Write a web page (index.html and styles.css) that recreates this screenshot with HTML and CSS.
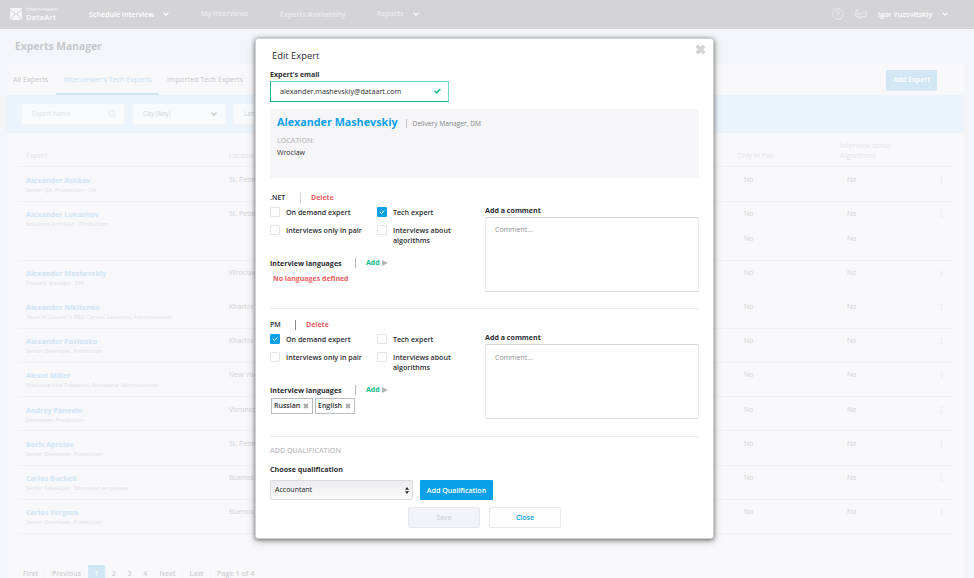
FILE: index.html
```html
<!DOCTYPE html>
<html lang="en">
<head>
  <meta charset="UTF-8">
  <meta name="viewport" content="width=device-width, initial-scale=1.0">
  <title>Experts Manager</title>
  <link rel="stylesheet" href="styles.css">
</head>
<body>
  <header class="header">
    <div class="logo">
      <svg width="12" height="12" viewBox="0 0 12 12">
        <rect width="12" height="12" rx="1" fill="#f6f6f8"/>
        <path d="M0 1.5L6 6.5L12 1.5M1 11.5L5 5.8M11 11.5L7 5.8" fill="none" stroke="#d4d4d6" stroke-width="1"/>
      </svg>
      <div class="logo-text"><span>Interviewer</span><b>DataArt</b></div>
    </div>
    <nav class="nav">
      <a class="nav-item active">Schedule Interview <svg class="chevron" viewBox="0 0 6 4"><path d="M.6 .7L3 3.1L5.4 .7"/></svg></a>
      <a class="nav-item interviews">My Interviews</a>
      <a class="nav-item availability">Experts Availability</a>
      <a class="nav-item reports">Reports <svg class="chevron" viewBox="0 0 6 4"><path d="M.6 .7L3 3.1L5.4 .7"/></svg></a>
    </nav>
    <div class="user">
      <svg width="12" height="12" viewBox="0 0 12 12" fill="none" stroke="#f0f0f2" stroke-width=".8">
        <circle cx="6" cy="6" r="5.3"/>
        <path d="M4.6 4.8C4.6 3 7.4 3 7.4 4.7C7.4 5.8 6 5.8 6 7M6 8V8.8"/>
      </svg>
      <svg width="12" height="12" viewBox="0 0 12 12" fill="none" stroke="#f0f0f2" stroke-width=".8">
        <path d="M3 2H1V8.8H4L5.5 10.6V8.8H11V2M3.5 4V6.3H6L9 3.5"/>
      </svg>
      <span class="user-name">Igor Yuzovitskiy</span>
      <svg class="chevron" viewBox="0 0 6 4"><path d="M.6 .7L3 3.1L5.4 .7"/></svg>
    </div>
  </header>

  <h1>Experts Manager</h1>

  <main class="panel">
    <div class="tabs">
      <a class="tab all">All Experts</a>
      <a class="tab selected">Interviewer's Tech Experts</a>
      <a class="tab imported">Imported Tech Experts</a>
      <button class="add-expert">Add Expert</button>
    </div>
    <div class="filters">
      <div class="filter search">Expert Name
        <svg width="8" height="8" viewBox="0 0 8 8" fill="none" stroke="#e4e6ea" stroke-width=".8"><circle cx="3.4" cy="3.4" r="2.7"/><path d="M5.4 5.4L7.6 7.6"/></svg>
      </div>
      <div class="filter city">City (Any) <svg class="chevron" viewBox="0 0 6 4"><path d="M.6 .7L3 3.1L5.4 .7"/></svg></div>
      <div class="filter language">Language</div>
    </div>

    <div class="table">
      <div class="row head"><span>Expert</span><span>Location</span><span>Only in Pair</span><span>Interview about<br>Algorithms</span></div>
      <div class="row first">
        <div><b>Alexander Ashkov</b><small>Senior QA, Production - QA</small></div>
        <span>St. Petersburg</span><span class="no">No</span><span class="no">No</span><i>⋮</i>
      </div>
      <div class="row double">
        <div><b>Alexander Lukashov</b><small>Solutions Architect , Production</small></div>
        <span>St. Petersburg</span><span class="no">No<em>No</em></span><span class="no">No<em>No</em></span><i>⋮</i>
      </div>
      <div class="row plain">
        <div><b>Alexander Mashevskiy</b><small>Delivery Manager, DM</small></div>
        <span>Wroclaw</span><span class="no">No</span><span class="no">No</span><i>⋮</i>
      </div>
      <div class="row">
        <div><b>Alexander Nikitenko</b><small>Head of DataArt's R&amp;D Center, Locations Administration</small></div>
        <span>Kharkiv</span><span class="no">No</span><span class="no">No</span><i>⋮</i>
      </div>
      <div class="row">
        <div><b>Alexander Pavlenko</b><small>Senior Developer, Production</small></div>
        <span>Kharkiv</span><span class="no">No</span><span class="no">No</span><i>⋮</i>
      </div>
      <div class="row">
        <div><b>Alexei Miller</b><small>Executive Vice President, Functional Administration</small></div>
        <span>New York</span><span class="no">No</span><span class="no">No</span><i>⋮</i>
      </div>
      <div class="row">
        <div><b>Andrey Panevin</b><small>Developer, Production</small></div>
        <span>Voronezh</span><span class="no">No</span><span class="no">No</span><i>⋮</i>
      </div>
      <div class="row">
        <div><b>Boris Aprelov</b><small>Senior Developer, Production</small></div>
        <span>St. Petersburg</span><span class="no">No</span><span class="no">No</span><i>⋮</i>
      </div>
      <div class="row">
        <div><b>Carlos Bucheli</b><small>Senior Developer, Dismissed employee</small></div>
        <span>Buenos Aires</span><span class="no">No</span><span class="no">No</span><i>⋮</i>
      </div>
      <div class="row">
        <div><b>Carlos Vergara</b><small>Senior Developer, Production</small></div>
        <span>Buenos Aires</span><span class="no">No</span><span class="no">No</span><i>⋮</i>
      </div>
    </div>

    <div class="pagination">
      <a class="page first-page">First</a><a class="page prev">Previous</a><a class="page current">1</a><a class="page num">2</a><a class="page num">3</a><a class="page num">4</a><a class="page next">Next</a><a class="page last">Last</a><span>Page 1 of 4</span>
    </div>
  </main>

  <div class="modal">
    <svg class="close-icon" width="11" height="11" viewBox="0 0 11 11"><path d="M1.8 1.8L9.2 9.2M9.2 1.8L1.8 9.2"/></svg>
    <h2>Edit Expert</h2>
    <label class="email-label">Expert's email</label>
    <div class="email">
      <span>alexander.mashevskiy@dataart.com</span>
      <svg width="7" height="6" viewBox="0 0 7 6"><path d="M.7 3L2.6 4.8L6.3 1"/></svg>
    </div>

    <div class="card">
      <div class="card-name"><b>Alexander Mashevskiy</b><span>Delivery Manager, DM</span></div>
      <div class="card-label">LOCATION:</div>
      <div class="card-city">Wroclaw</div>
    </div>

    <section class="qualification">
      <div class="left">
        <div class="q-title net"><b>.NET</b><a>Delete</a></div>
        <div class="checks">
          <label><i class="box"></i>On demand expert</label>
          <label><i class="box checked"><svg viewBox="0 0 10 10"><path d="M2.8 5L4.4 6.5L7.3 3.6"/></svg></i>Tech expert</label>
          <label><i class="box"></i>Interviews only in pair</label>
          <label><i class="box"></i>Interviews about<br>algorithms</label>
        </div>
        <div class="languages"><b>Interview languages</b><a>Add</a><svg width="6" height="6" viewBox="0 0 6 6"><path d="M0 0L6 3L0 6Z" fill="#b4b6b8"/></svg></div>
        <div class="empty">No languages defined</div>
      </div>
      <div class="right">
        <b>Add a comment</b>
        <div class="comment">Comment...</div>
      </div>
    </section>

    <section class="qualification">
      <div class="left">
        <div class="q-title pm"><b>PM</b><a>Delete</a></div>
        <div class="checks">
          <label><i class="box checked"><svg viewBox="0 0 10 10"><path d="M2.8 5L4.4 6.5L7.3 3.6"/></svg></i>On demand expert</label>
          <label><i class="box"></i>Tech expert</label>
          <label><i class="box"></i>Interviews only in pair</label>
          <label><i class="box"></i>Interviews about<br>algorithms</label>
        </div>
        <div class="languages"><b>Interview languages</b><a>Add</a><svg width="6" height="6" viewBox="0 0 6 6"><path d="M0 0L6 3L0 6Z" fill="#b4b6b8"/></svg></div>
        <div class="tags">
          <span class="tag russian">Russian<svg viewBox="0 0 6 6"><path d="M1 1L5 5M5 1L1 5"/></svg></span>
          <span class="tag english">English<svg viewBox="0 0 6 6"><path d="M1 1L5 5M5 1L1 5"/></svg></span>
        </div>
      </div>
      <div class="right">
        <b>Add a comment</b>
        <div class="comment">Comment...</div>
      </div>
    </section>

    <div class="add-title">ADD QUALIFICATION</div>
    <label class="choose">Choose qualification</label>
    <div class="add-row">
      <div class="select">Accountant <svg width="4" height="7" viewBox="0 0 4 7"><path d="M0 2.8L2 0L4 2.8ZM0 4.2L2 7L4 4.2Z" fill="#222"/></svg></div>
      <button class="add-btn">Add Qualification</button>
    </div>
    <div class="actions">
      <button class="save">Save</button>
      <button class="close">Close</button>
    </div>
  </div>
</body>
</html>
```

FILE: styles.css
```css
* {
  box-sizing: border-box;
}

body {
  margin: 0;
  height: 578px;
  overflow: hidden;
  position: relative;
  background-color: #f4f5f9;
  font-family: "Open Sans", sans-serif;
  font-size: 7px;
  line-height: 10px;
  color: #2c2d33;
}

button {
  font-family: inherit;
  font-size: 7px;
  line-height: 10px;
  font-weight: 600;
  padding: 0;
  border: none;
}

svg {
  display: block;
  flex-shrink: 0;
}

.chevron {
  width: 6px;
  height: 4px;
  fill: none;
  stroke: #fff;
  stroke-width: 1.2;
}

/* header */
.header {
  height: 29px;
  background-color: #d4d4d6;
  display: flex;
  align-items: center;
  padding: 0 26px 2px 10px;
  color: #fff;
}

.logo {
  display: flex;
  align-items: center;
  gap: 4px;
  width: 79px;
  color: #f6f6f8;
}

.logo-text {
  display: flex;
  flex-direction: column;
  font-size: 5.9px;
  line-height: 7px;
}

.logo-text b {
  font-size: 7.6px;
  line-height: 8px;
}

.nav {
  display: flex;
  font-weight: 600;
  color: #ececee;
}

.nav-item {
  display: flex;
  align-items: center;
  white-space: nowrap;
}

.nav-item.active {
  width: 112px;
  gap: 9px;
  color: #fff;
  font-size: 7.1px;
}

.nav-item.interviews {
  width: 79px;
}

.nav-item.availability {
  width: 97px;
  font-size: 7.15px;
}

.nav-item.reports {
  gap: 10px;
}

.user {
  margin-left: auto;
  display: flex;
  align-items: center;
  gap: 11px;
  font-weight: 600;
}

.user-name {
  width: 53px;
  white-space: nowrap;
  font-size: 7.15px;
}

h1 {
  margin: 10px 0 11px 15px;
  font-size: 10.3px;
  line-height: 14px;
  color: #c6c7cb;
}

/* experts list */
.panel {
  margin: 0 10px 0 6px;
  height: 514px;
  background-color: #f8f8fb;
  border-left: 1px solid #f1f2f5;
}

.tabs {
  display: flex;
  height: 31px;
  align-items: center;
  color: #c8c9cc;
}

.tab {
  height: 31px;
  padding-left: 6px;
  line-height: 31px;
  font-size: 7.2px;
  white-space: nowrap;
}

.tab.all {
  width: 49px;
}

.tab.selected {
  width: 103px;
  padding-left: 8px;
  color: #c6e1f4;
  border-bottom: 2px solid #cde5f4;
}

.tab.imported {
  padding-left: 8px;
}

.add-expert {
  width: 51px;
  height: 20px;
  margin: 1px 27px 0 auto;
  border-radius: 1px;
  background-color: #d1e7f6;
  color: #fff;
  box-shadow: 0 1px 1px #e4e7ec;
}

.filters {
  height: 38px;
  padding-left: 15px;
  display: flex;
  align-items: center;
  gap: 9px;
  background-color: #ebf4fd;
}

.filter {
  width: 102px;
  height: 20px;
  padding: 0 8px 0 10px;
  display: flex;
  align-items: center;
  justify-content: space-between;
  background-color: #f9fafc;
  box-shadow: 0 0 1px 1px #f0f3f7;
  color: #d0d2d6;
  font-size: 6.4px;
}

.filter.search {
  color: #e2e4e8;
}

.filter.city {
  width: 92px;
}

.filter.language {
  width: 92px;
}

.filter .chevron {
  stroke: #c4c6ca;
}

.table {
  padding: 0 10px;
}

.row {
  height: 34.2px;
  padding: 7.4px 0 0 9px;
  display: grid;
  grid-template-columns: 203px 508px 103px 98px 1fr;
  align-items: start;
  border-bottom: 1px solid #f1f2f4;
  color: #d0d1d4;
}

.row b {
  display: block;
  font-size: 7.15px;
  color: #cde5f6;
}

.row small {
  display: block;
  font-size: 5.6px;
  line-height: 10px;
  color: #dfe0e3;
}

.row .no {
  padding-left: 7px;
}

.row em {
  display: block;
  margin-top: 15px;
  font-style: normal;
}

.row i {
  font: 7px/10px "DejaVu Sans", sans-serif;
}

.row.head {
  height: 34px;
  padding-top: 7px;
  align-items: end;
  padding-bottom: 5px;
  color: #e4e5e8;
}

.row.first {
  height: 35px;
  padding-top: 8.4px;
}

.row.double {
  height: 58.5px;
}

.row.plain {
  border-color: transparent;
}

.pagination {
  margin: 31px 0 0 10px;
  display: flex;
  height: 20px;
  line-height: 17px;
  font-weight: 600;
  color: #cfd0d3;
}

.page {
  text-align: center;
  border-right: 1px solid #f3f4f7;
}

.page.first-page {
  width: 28px;
}

.page.prev {
  width: 43px;
  border: none;
}

.page.current {
  width: 18px;
  background-color: #d1e7f6;
  color: #fff;
}

.page.num {
  width: 15.7px;
  border: none;
}

.page.next {
  width: 30px;
}

.page.last {
  width: 28px;
}

.pagination span {
  padding-left: 6px;
  font-size: 7.15px;
}

/* edit expert dialog */
.modal {
  position: absolute;
  left: 255px;
  top: 38px;
  width: 459px;
  height: 501px;
  padding: 11px 14px 0 15px;
  background-color: #fff;
  border: 1px solid #d0d0d2;
  border-radius: 3px;
  box-shadow: 0 1px 4px rgba(0, 0, 0, .5), 0 2px 10px rgba(0, 0, 0, .2);
}

.close-icon {
  position: absolute;
  right: 7px;
  top: 5px;
  stroke: #d2d3d5;
  stroke-width: 3.6;
}

h2 {
  margin: 0 0 0 1px;
  font-size: 9.4px;
  font-weight: 400;
  line-height: 12px;
}

.email-label {
  display: block;
  margin: 8px 0 0 -1px;
  font-weight: 700;
}

.email {
  width: 179px;
  height: 21px;
  margin: 1px 0 7px -1px;
  padding: 0 7px 1px 9px;
  display: flex;
  align-items: center;
  justify-content: space-between;
  border: 1px solid #6bd5c2;
  border-left-color: #10b986;
  border-bottom-color: #10b986;
  font-size: 7.2px;
}

.email svg {
  fill: none;
  stroke: #10b986;
  stroke-width: 1.6;
}

.card {
  width: 429px;
  height: 69px;
  margin-left: -1px;
  padding: 5px 7px;
  background-color: #f6f6f8;
}

.card-name {
  display: flex;
  align-items: center;
  line-height: 16px;
}

.card-name b {
  font-size: 10.75px;
  color: #0a9fe8;
}

.card-name span {
  margin: 3px 0 0 8px;
  padding-left: 6px;
  line-height: 9px;
  font-size: 6.65px;
  color: #85878c;
  border-left: 1px solid #c8c9cc;
}

.card-label {
  margin-top: 6px;
  color: #bfc0c4;
  font-weight: 600;
}

.card-city {
  margin-top: 2px;
}

.qualification {
  width: 429px;
  height: 128px;
  margin-left: -1px;
  padding-top: 10.5px;
  display: flex;
  border-bottom: 1px solid #eaebee;
}

.card + .qualification {
  height: 131px;
  padding-top: 14.5px;
}

.left {
  width: 215px;
}

.right {
  width: 214px;
  padding-top: 12.5px;
}

.card + .qualification .right {
  padding-top: 12px;
}

.languages b,
.right b {
  font-weight: 700;
}

.q-title {
  display: flex;
}

.q-title b {
  width: 30px;
  font-weight: 600;
}

.q-title.pm b {
  width: 25px;
}

.q-title a {
  padding-left: 10px;
  border-left: 1px solid #d4d5d8;
  color: #f2605f;
  font-weight: 700;
}

.q-title.pm a {
  border-color: #85868a;
}

.checks {
  margin-top: 4.2px;
  display: grid;
  grid-template-columns: 107px 108px;
  row-gap: 8px;
  font-weight: 600;
  font-size: 7.1px;
}

.checks label {
  display: flex;
}

.box {
  width: 10px;
  height: 10px;
  margin-right: 6px;
  border: 1px solid #e3e4e8;
  border-radius: 1px;
}

.box.checked {
  background-color: #0aa0e8;
  border-color: #0aa0e8;
}

.box svg {
  margin: -1px;
  width: 10px;
  height: 10px;
  fill: none;
  stroke: #fff;
}

.languages {
  margin-top: 13.3px;
  display: flex;
  align-items: center;
}

.languages b {
  width: 85px;
  font-size: 7.1px;
}

.languages a {
  padding: 0 2px 0 10px;
  border-left: 1px solid #b4b5b8;
  color: #12b98a;
  font-weight: 700;
}

.empty {
  margin: 6px 0 0 3px;
  font-weight: 700;
  color: #f2605f;
}

.right b {
  display: block;
  font-size: 7.1px;
}

.comment {
  margin-top: 2px;
  height: 75px;
  padding: 7.5px 9px;
  border: 1px solid #e8e9ec;
  border-top-color: #d6d7da;
  border-bottom-color: #dcdde0;
  border-radius: 2px;
  color: #909196;
}

.tags {
  display: flex;
  gap: 2px;
  margin: 3.5px 0 0 1px;
}

.tag {
  height: 16px;
  width: 42px;
  padding: 0 3px 0 2px;
  display: flex;
  align-items: center;
  justify-content: space-between;
  border: 1px solid #bbbcbf;
  font-weight: 600;
}

.tag.english {
  width: 40px;
}

.tag svg {
  width: 6px;
  height: 6px;
  stroke: #a6a8ab;
  stroke-width: 1.8;
}

.add-title {
  margin: 8px 0 0 -1px;
  color: #bfc0c4;
  font-weight: 600;
  font-size: 7.1px;
}

.choose {
  display: block;
  margin: 9px 0 6px -1px;
  font-weight: 700;
  font-size: 7.15px;
}

.add-row {
  display: flex;
  gap: 7px;
  margin-left: -1px;
}

.select {
  width: 143px;
  height: 20px;
  padding: 0 3px 0 4px;
  display: flex;
  align-items: center;
  justify-content: space-between;
  border: 1px solid #dcdcdf;
  border-radius: 2px;
  background: linear-gradient(#ececef, #fafafa);
  color: #222;
}

.add-btn {
  width: 73px;
  height: 20px;
  border-radius: 1px;
  background-color: #0aa0e8;
  color: #fff;
  font-size: 7.1px;
}

.actions {
  display: flex;
  gap: 9px;
  margin: 7px 0 0 137px;
}

.actions button {
  width: 72px;
  height: 21px;
  border: 1px solid #e8e9ec;
  border-radius: 2px;
}

.actions .save {
  background-color: #f2f3f6;
  color: #d2d4d8;
}

.actions .close {
  background-color: #fdfdfd;
  color: #0a9fe0;
}
```
